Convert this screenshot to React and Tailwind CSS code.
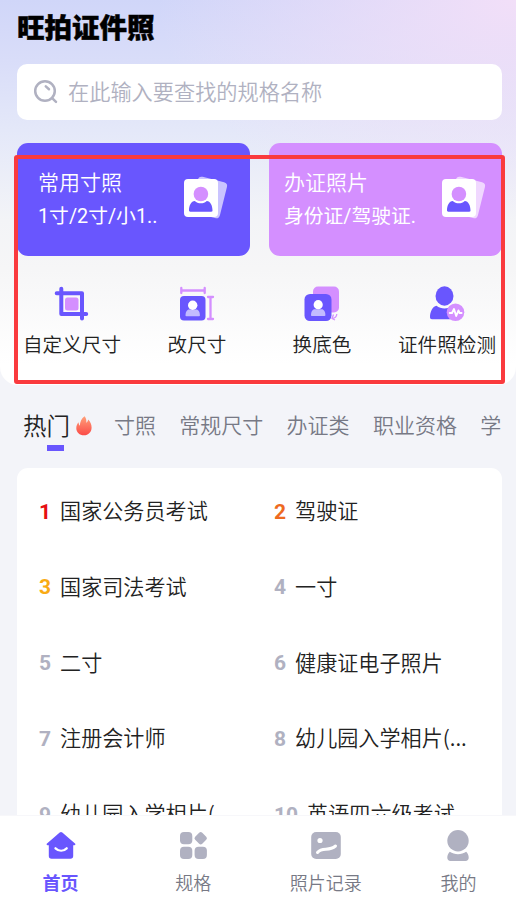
const CARDS = [
  { title: '常用寸照', desc: '1寸/2寸/小1..', box: 'bg-[#6956fe] pl-[21px] pr-[21px]', head: '#d48fff', body: '#6956fe' },
  { title: '办证照片', desc: '身份证/驾驶证.', box: 'bg-[#d48fff] pl-[15px] pr-[15px]', head: '#d48fff', body: '#6956fe' },
];

const TABS = ['寸照', '常规尺寸', '办证类', '职业资格', '学'];

const HOT = [
  { name: '国家公务员考试', color: 'text-[#e60f12]' },
  { name: '驾驶证', color: 'text-[#ee6a1f]' },
  { name: '国家司法考试', color: 'text-[#f9ab14]' },
  { name: '一寸' },
  { name: '二寸' },
  { name: '健康证电子照片' },
  { name: '注册会计师' },
  { name: '幼儿园入学相片(...' },
  { name: '幼儿园入学相片(' },
  { name: '英语四六级考试' },
];

const SearchIcon = () => (
  <svg width="26" height="26" viewBox="0 0 26 26" fill="none" stroke="#b0b1c1" strokeWidth="2.5" strokeLinecap="round">
    <circle cx="12" cy="12" r="9.8" />
    <path d="M19.4 19.4l3.6 3.4M12.8 7.4l3.2 2.8" />
  </svg>
);

const PhotoIcon = ({ head, body }) => (
  <svg width="46" height="46" viewBox="0 0 46 46">
    <rect x="11" y="4" width="30" height="37" rx="4" transform="rotate(14 26 22)" fill="#fff" opacity=".65" />
    <rect x="1" y="4" width="34" height="38" rx="4" fill="#fff" />
    <path d="M6 35.5c0-5 2.2-9.500 5.800-9.500 1.600 1.500 3.600 2.300 6 2.300s4.400-.8 6-2.300c3.500 0 5.700 4.500 5.700 9.500 0 .8-.5 1.200-1.200 1.200H7.200c-.7 0-1.200-.4-1.200-1.200z" fill={body} />
    <circle cx="17.9" cy="19" r="8.3" fill="#fff" />
    <circle cx="17.9" cy="19" r="7.3" fill={head} />
  </svg>
);

const CropIcon = () => (
  <svg width="36" height="36" viewBox="0 0 36 36" fill="none">
    <path d="M7.3 2.7v25.200H32.200M2.700 7.300H28v25.200" stroke="#6956fe" strokeWidth="4" strokeLinecap="round" strokeLinejoin="round" />
    <rect x="11" y="11.5" width="13.5" height="13" rx="2.5" fill="#d48fff" />
  </svg>
);

const ResizeIcon = () => (
  <svg width="36" height="36" viewBox="0 0 36 36">
    <path d="M2.3 2v5M25.7 2v5M2.3 4.500h23.400M29 11h5M29 33h5M31.500 11v22" stroke="#d48fff" strokeWidth="2.3" strokeLinecap="round" />
    <rect x="1" y="10" width="25.5" height="24.5" rx="4" fill="#6956fe" />
    <path d="M6.5 29.500c0-3.500 1.500-6 3.700-6h7c2.200 0 3.700 2.500 3.700 6 0 .5-.3.800-.8.800H7.300c-.5 0-.8-.3-.8-.8z" fill="#c3bbff" />
    <circle cx="13.7" cy="19.3" r="4.7" fill="#fff" />
  </svg>
);

const BackdropIcon = () => (
  <svg width="36" height="36" viewBox="0 0 36 36">
    <rect x="9" y="0.5" width="26" height="26" rx="5" fill="#d48fff" />
    <path d="M32.800 28c-.2 2.700-1.500 4.200-4.300 4.500M29.500 28.500l-1.500 4 3 1.500" fill="none" stroke="#d48fff" strokeWidth="1.300" />
    <rect x="0.500" y="8" width="27" height="27" rx="5.500" fill="#6956fe" />
    <path d="M7 29.200c0-3.500 1.500-6 3.700-6h7c2.200 0 3.700 2.500 3.700 6 0 .5-.3.800-.8.800H7.800c-.5 0-.8-.3-.8-.8z" fill="#c3bbff" />
    <circle cx="14.200" cy="18.700" r="4.600" fill="#fff" />
  </svg>
);

const CheckIcon = () => (
  <svg width="36" height="36" viewBox="0 0 36 36">
    <ellipse cx="15.500" cy="10" rx="9" ry="9.700" fill="#6956fe" />
    <path d="M1 31c0-5 2.500-10.500 6.500-11.200 4.600 3.500 11.400 3.500 16 0l3 3V33.200H3C1.700 33.200 1 32.500 1 31z" fill="#6956fe" />
    <circle cx="26.500" cy="26.200" r="8.800" fill="#d48fff" />
    <path d="M20.700 27h2.300l2-4 2.200 7 2.200-5.500 1.200 2.500h2" fill="none" stroke="#fff" strokeWidth="1.900" strokeLinecap="round" strokeLinejoin="round" />
  </svg>
);

const FlameIcon = () => (
  <svg width="16" height="20" viewBox="0 0 16 20">
    <defs>
      <linearGradient id="flame" x1="0" y1="0" x2="0" y2="1">
        <stop offset="0" stopColor="#ffa07a" />
        <stop offset="1" stopColor="#fb4b48" />
      </linearGradient>
    </defs>
    <path d="M8.600.3c1.500 1.800 2 4 1.700 6.400 1-.6 1.600-1.700 1.900-3.200 2.200 2.200 3.400 5 3.400 8 0 4.600-3.200 7.800-7.600 7.800S.3 16.300.3 12.200c0-2.200.8-4.100 2.300-5.900 0 1.600.4 2.700 1.200 3.500C4 5.800 5.500 2.500 8.600.3z" fill="url(#flame)" />
  </svg>
);

const HomeIcon = () => (
  <svg width="32" height="32" viewBox="0 0 32 32">
    <path d="M14.700 2.600a2 2 0 0 1 2.600 0L30 13.600c.8.700.4 1.700-.6 1.700h-1.200v10.800c0 1.700-1 2.700-2.700 2.700h-19c-1.700 0-2.700-1-2.700-2.700V15.300H2.600c-1 0-1.400-1-.6-1.700z" fill="#6956fe" />
    <path d="M10.500 18.300c3.500 3.200 7.800 3.200 11.200 0" fill="none" stroke="#fff" strokeWidth="2.300" strokeLinecap="round" />
  </svg>
);

const GridIcon = () => (
  <svg width="32" height="32" viewBox="0 0 32 32" fill="#b0b1c1">
    <rect x="3" y="2" width="12.300" height="12.300" rx="4" />
    <rect x="18.700" y="3.200" width="10" height="10" rx="2.200" transform="rotate(45 23.700 8.200)" />
    <rect x="3" y="16.700" width="12.300" height="12.300" rx="4" />
    <rect x="17.600" y="16.700" width="12.300" height="12.300" rx="4" />
  </svg>
);

const RecordIcon = () => (
  <svg width="32" height="32" viewBox="0 0 32 32">
    <rect x="1.200" y="2" width="29.600" height="27" rx="5" fill="#b0b1c1" />
    <circle cx="10" cy="10.500" r="2.600" fill="#fff" />
    <path d="M7.500 22.500c5-6 11-.5 18-6.500" fill="none" stroke="#fff" strokeWidth="3" strokeLinecap="round" />
  </svg>
);

const MineIcon = () => (
  <svg width="32" height="32" viewBox="0 0 32 32" fill="#b0b1c1">
    <circle cx="16" cy="10.700" r="10.700" />
    <path d="M7.800 21.800c4.700 3.200 11.700 3.200 16.400 0 1.600 1.500 2.500 3.800 2.500 6 0 2-1.200 3.200-3.200 3.200h-15c-2 0-3.200-1.200-3.200-3.200 0-2.200.9-4.500 2.500-6z" />
  </svg>
);

const TOOLS = [
  { label: '自定义尺寸', Icon: CropIcon },
  { label: '改尺寸', Icon: ResizeIcon },
  { label: '换底色', Icon: BackdropIcon },
  { label: '证件照检测', Icon: CheckIcon },
];

const NAV = [
  { label: '首页', Icon: HomeIcon, active: true },
  { label: '规格', Icon: GridIcon },
  { label: '照片记录', Icon: RecordIcon },
  { label: '我的', Icon: MineIcon },
];

const Hero = () => (
  <section className="h-[385px] rounded-b-[18px] bg-[radial-gradient(ellipse_360px_220px_at_100%_0%,#f2dff8_0%,#f2dff800_100%),linear-gradient(180deg,#d0d6f9_0px,#d9ddf9_60px,#e4e8f9_130px,#f3f4f7_220px,#f6f6f7_270px,#ffffff_365px)]">
    <h1 className="flex h-16 items-center pb-[11px] pl-[17px] text-[27.5px] leading-none font-black text-black [-webkit-text-stroke:0.5px_#000]">
      旺拍证件照
    </h1>

    <div className="mr-[14px] ml-[17px] flex h-14 items-center rounded-[10px] bg-white pl-4">
      <SearchIcon />
      <span className="ml-[9px] pb-[3px] text-[21.2px] text-[#b0b1c1]">在此输入要查找的规格名称</span>
    </div>

    <div className="mt-[23px] mr-[14px] ml-[17px] grid grid-cols-2 gap-[19px]">
      {CARDS.map((card) => (
        <div key={card.title} className={`flex h-[113px] justify-between rounded-[11px] text-white ${card.box}`}>
          <div className="pt-[21px] whitespace-nowrap">
            <p className="text-[21px] leading-[34px]">{card.title}</p>
            <p className="mt-[2px] font-[Roboto,'Noto_Sans_CJK_SC'] text-[19.8px] leading-[34px] font-normal">{card.desc}</p>
          </div>
          <div className="pt-[32px]">
            <PhotoIcon head={card.head} body={card.body} />
          </div>
        </div>
      ))}
    </div>

    <div className="mt-[30px] flex justify-between pr-5 pl-[23px]">
      {TOOLS.map(({ label, Icon }) => (
        <div key={label} className="flex w-[98px] flex-col items-center">
          <Icon />
          <span className="mt-[7px] text-[19.6px] leading-[30px] whitespace-nowrap text-[#222]">{label}</span>
        </div>
      ))}
    </div>
  </section>
);

const BottomNav = () => (
  <nav className="flex h-[84px] shrink-0 justify-between border-t border-[#f7f7fa] bg-white pt-[14px] pr-[21px] pl-6">
    {NAV.map(({ label, Icon, active }) => (
      <div key={label} className="flex w-[73px] flex-col items-center">
        <Icon />
        <span className={`mt-[6px] text-[18px] leading-[28px] whitespace-nowrap ${active ? 'font-bold text-[#6956fe]' : 'text-[#777985]'}`}>
          {label}
        </span>
      </div>
    ))}
  </nav>
);

export default function App() {
  return (
    <div className="relative flex h-[899px] w-[516px] flex-col overflow-hidden bg-[#f3f4f9] font-['Noto_Sans_CJK_SC',sans-serif] font-[350]">
      <main className="min-h-0 flex-1 overflow-hidden">
        <Hero />

        <div className="flex h-[83px] items-start overflow-hidden pt-[24px] pl-[23px] text-[21px] leading-[30px] whitespace-nowrap text-[#777985]">
          <div className="flex flex-col items-center">
            <div className="flex h-8 items-center text-[23.5px] leading-[32px] text-[#222]">
              热门
              <span className="mt-[2px] ml-[6px]">
                <FlameIcon />
              </span>
            </div>
            <span className="mt-1 -ml-1 h-[6px] w-[17px] bg-[#6956fe]" />
          </div>
          <div className="ml-[22px] flex gap-[23.3px]">
            {TABS.map((tab) => (
              <span key={tab}>{tab}</span>
            ))}
          </div>
        </div>

        <div className="mr-[14px] ml-[17px] grid grid-cols-[235px_1fr] rounded-t-[11px] bg-white pt-[5px] pl-[22px]">
          {HOT.map((item, i) => (
            <div key={item.name} className="flex h-[75.8px] items-center whitespace-nowrap">
              <span className={`pt-[3px] font-[Roboto] text-[21px] font-bold ${item.color || 'text-[#b0b1c1]'}`}>{i + 1}</span>
              <span className="ml-[9px] text-[21.1px] text-[#222]">{item.name}</span>
            </div>
          ))}
        </div>
      </main>

      <BottomNav />

      {/* highlight frame over the quick tools */}
      <div className="absolute top-[155px] left-[14px] h-[229px] w-[491px] rounded-[3px] border-4 border-[#fa3a3e]" />
    </div>
  );
}
